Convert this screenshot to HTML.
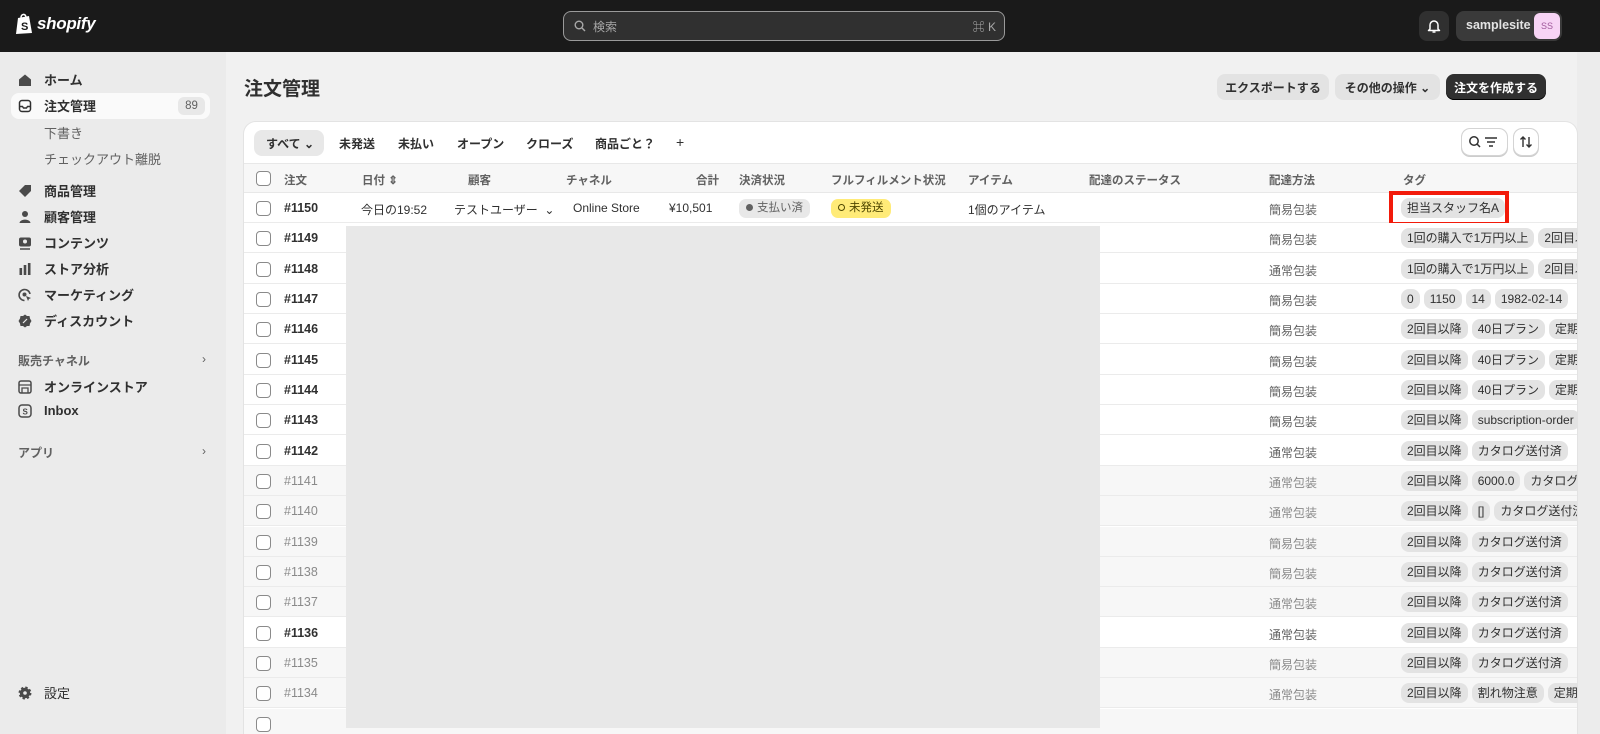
<!DOCTYPE html>
<html style="width:1600px;height:734px;overflow:hidden"><head><meta charset="utf-8"><style>
*{box-sizing:border-box;margin:0;padding:0}
body{width:1600px;height:734px;overflow:hidden;background:#f1f1f1;font-family:"Liberation Sans","Noto Sans CJK JP",sans-serif;color:#303030;font-size:13px;position:relative}
.top{position:absolute;left:0;top:0;width:1600px;height:52px;background:#1a1a1a}
.side{position:absolute;left:0;top:52px;width:226px;height:682px;background:#ebebeb}
.nav{position:absolute;left:18px;font-size:13px;font-weight:bold;color:#303030;display:flex;align-items:center}
.nav .ic{width:14px;height:14px;margin-right:12px;display:inline-block}
.sub{position:absolute;left:44px;font-size:13px;color:#616161}
.sec{position:absolute;left:18px;font-size:12px;color:#616161;font-weight:bold;width:188px}
.sec span{position:absolute;right:0;font-weight:normal}
.abs{position:absolute}
.btn{position:absolute;top:74px;height:26px;border-radius:8px;background:#e3e3e3;font-size:12px;font-weight:bold;display:flex;align-items:center;justify-content:center;color:#303030}
.card{position:absolute;left:244px;top:122px;width:1333px;height:612px;background:#fff;border-radius:12px 12px 0 0;overflow:hidden;box-shadow:0 0 0 1px #e3e3e3}
.tab{position:absolute;top:21px;font-size:12px;font-weight:bold;color:#303030}
.hdr{position:absolute;left:0;top:41px;width:100%;height:30px;background:#f7f7f7;border-top:1px solid #e8e8e8;border-bottom:1px solid #e8e8e8}
.hdr div{position:absolute;top:8px;font-size:11.5px;color:#616161;font-weight:bold}
.row{position:absolute;left:0;width:100%;height:30px;border-bottom:1px solid #ebebeb;background:#fff}
.row.g{background:#f7f7f7}
.cb{position:absolute;left:12px;top:8px;width:15px;height:15px;border:1px solid #8a8a8a;border-radius:4px;background:#fff}
.num{position:absolute;left:40px;top:8px;font-size:12.5px;font-weight:bold;color:#303030}
.g .num{font-weight:normal;color:#8a8a8a}
.ship{position:absolute;left:1025px;top:8px;font-size:12px;color:#616161}
.g .ship{color:#8a8a8a}
.tags{position:absolute;left:1157px;top:5px;display:flex;gap:4px;white-space:nowrap}
.tags span{background:#e3e3e3;border-radius:8px;height:20px;line-height:20px;padding:0 6px;font-size:12px;color:#303030;font-weight:normal}
</style></head><body>
<div class="top">
 <svg class="abs" style="left:15px;top:13px" width="19" height="22" viewBox="0 0 19 22"><path d="M3 5 L14 3 L17 20 L1 21 Z" fill="#fff"/><path d="M6 5 C6 1 10 0 11 4" stroke="#fff" fill="none" stroke-width="1.5"/><text x="6" y="17" font-size="11" font-weight="bold" fill="#1a1a1a" font-family="Liberation Sans">S</text></svg>
 <div class="abs" style="left:37px;top:14px;color:#fff;font-size:17px;font-weight:bold;font-style:italic;letter-spacing:-0.3px">shopify</div>
 <div class="abs" style="left:563px;top:11px;width:442px;height:30px;border:1.5px solid #9a9a9a;border-radius:8px;background:#303030">
  <svg class="abs" style="left:10px;top:8px" width="12" height="12" viewBox="0 0 12 12"><circle cx="5" cy="5" r="3.8" stroke="#aaa" stroke-width="1.4" fill="none"/><path d="M8 8 L11 11" stroke="#aaa" stroke-width="1.4"/></svg>
  <div class="abs" style="left:29px;top:6px;color:#a8a8a8;font-size:12px">検索</div>
  <div class="abs" style="right:8px;top:6px;color:#a8a8a8;font-size:12px">⌘ K</div>
 </div>
 <div class="abs" style="left:1419px;top:11px;width:30px;height:30px;border-radius:8px;background:#303030">
  <svg class="abs" style="left:8px;top:7px" width="14" height="16" viewBox="0 0 14 16"><path d="M3 11 V7 a4 4 0 0 1 8 0 V11 L12.5 12.5 H1.5 Z" stroke="#fff" stroke-width="1.5" fill="none" stroke-linejoin="round"/><path d="M5.5 14 h3" stroke="#fff" stroke-width="1.5"/></svg>
 </div>
 <div class="abs" style="left:1456px;top:11px;width:106px;height:30px;border-radius:8px;background:#3a3a3a">
  <div class="abs" style="left:10px;top:7px;color:#e3e3e3;font-size:12.5px;font-weight:bold">samplesite</div>
  <div class="abs" style="left:78px;top:2px;width:26px;height:26px;border-radius:6px;background:#f7d4f5;color:#a0589b;font-size:9px;text-align:center;line-height:26px">SS</div>
 </div>
</div>
<div class="side">
 <div class="abs" style="left:11px;top:41px;width:199px;height:26px;background:#fafafa;border-radius:8px"></div>
 <div class="abs" style="left:178px;top:45px;width:27px;height:18px;background:#e8e8e8;border-radius:6px;font-size:11.5px;color:#616161;text-align:center;line-height:18px">89</div>
</div>
<div class="nav" style="top:70px"><svg class="ic" viewBox="0 0 14 14"><path d="M1 6.5 L7 1.5 L13 6.5 V13 H1Z" fill="#4a4a4a"/></svg>ホーム</div>
<div class="nav" style="top:96px"><svg class="ic" viewBox="0 0 14 14"><rect x="1.5" y="1.5" width="11" height="11" rx="2.5" stroke="#303030" stroke-width="1.5" fill="none"/><path d="M1.5 7.5 H4.5 L5.5 9 H8.5 L9.5 7.5 H12.5" stroke="#303030" stroke-width="1.4" fill="none"/></svg>注文管理</div>
<div class="sub" style="top:123px">下書き</div>
<div class="sub" style="top:149px">チェックアウト離脱</div>
<div class="nav" style="top:181px"><svg class="ic" viewBox="0 0 14 14"><path d="M7 1 H13 V7 L7 13 L1 7Z" fill="#4a4a4a"/></svg>商品管理</div>
<div class="nav" style="top:207px"><svg class="ic" viewBox="0 0 14 14"><circle cx="7" cy="4" r="3" fill="#4a4a4a"/><path d="M1.5 13 C2 8.5 12 8.5 12.5 13Z" fill="#4a4a4a"/></svg>顧客管理</div>
<div class="nav" style="top:233px"><svg class="ic" viewBox="0 0 14 14"><rect x="1" y="1.5" width="12" height="9" rx="2" fill="#4a4a4a"/><circle cx="7" cy="5.5" r="2" fill="#ebebeb"/><path d="M2 13 H12" stroke="#4a4a4a" stroke-width="1.5"/></svg>コンテンツ</div>
<div class="nav" style="top:259px"><svg class="ic" viewBox="0 0 14 14"><rect x="1.5" y="6" width="2.6" height="7" fill="#4a4a4a"/><rect x="5.7" y="3" width="2.6" height="10" fill="#4a4a4a"/><rect x="9.9" y="1" width="2.6" height="12" fill="#4a4a4a"/></svg>ストア分析</div>
<div class="nav" style="top:285px"><svg class="ic" viewBox="0 0 14 14"><path d="M12 6 A5.5 5.5 0 1 0 6.5 12.5" stroke="#4a4a4a" stroke-width="1.6" fill="none"/><circle cx="6.5" cy="6.5" r="2" fill="#4a4a4a"/><path d="M8 8 L13 10 L11 11 L10 13Z" fill="#4a4a4a"/></svg>マーケティング</div>
<div class="nav" style="top:311px"><svg class="ic" viewBox="0 0 14 14"><path d="M7 0.5 L9 2 L11.5 2 L12 4.5 L13.5 7 L12 9.5 L11.5 12 L9 12 L7 13.5 L5 12 L2.5 12 L2 9.5 L0.5 7 L2 4.5 L2.5 2 L5 2Z" fill="#4a4a4a"/><path d="M5 9 L9 5" stroke="#ebebeb" stroke-width="1.2"/></svg>ディスカウント</div>
<div class="sec" style="top:352px">販売チャネル<span>›</span></div>
<div class="nav" style="top:377px"><svg class="ic" viewBox="0 0 14 14"><rect x="1" y="1" width="12" height="12" rx="2" stroke="#4a4a4a" stroke-width="1.5" fill="none"/><path d="M1 5 H13 M4 13 V8 H10 V13" stroke="#4a4a4a" stroke-width="1.3" fill="none"/></svg>オンラインストア</div>
<div class="nav" style="top:403px"><svg class="ic" viewBox="0 0 14 14"><rect x="1" y="1" width="12" height="12" rx="3" stroke="#4a4a4a" stroke-width="1.5" fill="none"/><text x="4.5" y="10.5" font-size="8" font-weight="bold" fill="#4a4a4a">S</text></svg>Inbox</div>
<div class="sec" style="top:444px">アプリ<span>›</span></div>
<div class="nav" style="top:683px"><svg class="ic" viewBox="0 0 14 14"><circle cx="7" cy="7" r="5.2" fill="#4a4a4a" stroke="#4a4a4a" stroke-width="2.5" stroke-dasharray="2.2 1.9"/><circle cx="7" cy="7" r="1.8" fill="#ebebeb"/></svg><span style="font-weight:normal">設定</span></div>

<div class="abs" style="left:244px;top:74px;font-size:19px;font-weight:bold;color:#303030">注文管理</div>
<div class="btn" style="left:1217px;width:112px">エクスポートする</div>
<div class="btn" style="left:1335px;width:105px">その他の操作 ⌄</div>
<div class="btn" style="left:1446px;width:100px;background:#303030;color:#fff;box-shadow:inset 0 -1px 0 #000">注文を作成する</div>
<div class="abs" style="left:1577px;top:52px;width:23px;height:682px;background:#ececec"></div>

<div class="card">
 <div class="abs" style="left:10px;top:8px;width:70px;height:26px;background:#e8e8e8;border-radius:8px"></div>
 <div class="tab" style="left:22px;top:13px">すべて ⌄</div>
 <div class="tab" style="left:95px;top:13px">未発送</div>
 <div class="tab" style="left:154px;top:13px">未払い</div>
 <div class="tab" style="left:213px;top:13px">オープン</div>
 <div class="tab" style="left:282px;top:13px">クローズ</div>
 <div class="tab" style="left:351px;top:13px">商品ごと？</div>
 <div class="tab" style="left:432px;top:12px;font-size:14px;font-weight:normal">+</div>
 <div class="abs" style="left:1218px;top:7px;width:45px;height:26px;border-radius:8px;box-shadow:0 0 0 1px #d4d4d4,0 1px 0 1px #ccc">
  <svg class="abs" style="left:6px;top:6px" width="32" height="14" viewBox="0 0 32 14"><circle cx="6" cy="6" r="4.2" stroke="#303030" stroke-width="1.5" fill="none"/><path d="M9 9 L12 12" stroke="#303030" stroke-width="1.5"/><path d="M17 3 H29 M19 7 H27 M21 11 H25" stroke="#303030" stroke-width="1.5"/></svg>
 </div>
 <div class="abs" style="left:1270px;top:7px;width:24px;height:26px;border-radius:8px;box-shadow:0 0 0 1px #d4d4d4,0 1px 0 1px #ccc">
  <svg class="abs" style="left:5px;top:6px" width="14" height="14" viewBox="0 0 14 14"><path d="M4 12 V2 M1.5 4.5 L4 2 L6.5 4.5 M10 2 V12 M7.5 9.5 L10 12 L12.5 9.5" stroke="#303030" stroke-width="1.4" fill="none"/></svg>
 </div>
 <div class="hdr">
  <span class="cb" style="top:7px"></span>
  <div style="left:40px">注文</div><div style="left:118px">日付 ⇕</div><div style="left:224px">顧客</div><div style="left:322px">チャネル</div><div style="left:452px">合計</div><div style="left:495px">決済状況</div><div style="left:587px">フルフィルメント状況</div><div style="left:724px">アイテム</div><div style="left:845px">配達のステータス</div><div style="left:1025px">配達方法</div><div style="left:1159px">タグ</div>
 </div>
 <div class="row" style="top:71px"><span class="cb"></span><span class="num">#1150</span>
  <span class="abs" style="left:117px;top:8px;font-size:12px">今日の19:52</span>
  <span class="abs" style="left:210px;top:8px;font-size:12px">テストユーザー &nbsp;⌄</span>
  <span class="abs" style="left:329px;top:8px;font-size:12px">Online Store</span>
  <span class="abs" style="left:425px;top:8px;font-size:12px">¥10,501</span>
  <span class="abs" style="left:495px;top:6px;height:19px;line-height:19px;padding:0 7px;border-radius:7px;background:#e8e8e8;font-size:11.5px;color:#616161"><span style="display:inline-block;width:7px;height:7px;border-radius:50%;background:#616161;margin-right:4px"></span>支払い済</span>
  <span class="abs" style="left:587px;top:6px;height:19px;line-height:19px;padding:0 7px;border-radius:7px;background:#ffeb78;font-size:11.5px;color:#4f4700"><span style="display:inline-block;width:7px;height:7px;border-radius:50%;border:1.3px solid #4f4700;margin-right:4px"></span>未発送</span>
  <span class="abs" style="left:724px;top:8px;font-size:12px">1個のアイテム</span>
  <span class="ship">簡易包装</span><div class="tags"><span>担当スタッフ名A</span></div>
  <div class="abs" style="left:1145px;top:-2px;width:120px;height:35px;border:4px solid #f21a0a"></div>
 </div>
 <div class="row" style="top:101px"><span class="cb"></span><span class="num">#1149</span><span class="ship">簡易包装</span><div class="tags"><span>1回の購入で1万円以上</span><span>2回目以降</span></div></div>
 <div class="row" style="top:132px"><span class="cb"></span><span class="num">#1148</span><span class="ship">通常包装</span><div class="tags"><span>1回の購入で1万円以上</span><span>2回目以降</span></div></div>
 <div class="row" style="top:162px"><span class="cb"></span><span class="num">#1147</span><span class="ship">簡易包装</span><div class="tags"><span>0</span><span>1150</span><span>14</span><span>1982-02-14</span></div></div>
 <div class="row" style="top:192px"><span class="cb"></span><span class="num">#1146</span><span class="ship">簡易包装</span><div class="tags"><span>2回目以降</span><span>40日プラン</span><span>定期</span></div></div>
 <div class="row" style="top:223px"><span class="cb"></span><span class="num">#1145</span><span class="ship">簡易包装</span><div class="tags"><span>2回目以降</span><span>40日プラン</span><span>定期</span></div></div>
 <div class="row" style="top:253px"><span class="cb"></span><span class="num">#1144</span><span class="ship">簡易包装</span><div class="tags"><span>2回目以降</span><span>40日プラン</span><span>定期</span></div></div>
 <div class="row" style="top:283px"><span class="cb"></span><span class="num">#1143</span><span class="ship">簡易包装</span><div class="tags"><span>2回目以降</span><span>subscription-order</span></div></div>
 <div class="row" style="top:314px"><span class="cb"></span><span class="num">#1142</span><span class="ship">通常包装</span><div class="tags"><span>2回目以降</span><span>カタログ送付済</span></div></div>
 <div class="row g" style="top:344px"><span class="cb"></span><span class="num">#1141</span><span class="ship">通常包装</span><div class="tags"><span>2回目以降</span><span>6000.0</span><span>カタログ送付済</span></div></div>
 <div class="row g" style="top:374px"><span class="cb"></span><span class="num">#1140</span><span class="ship">通常包装</span><div class="tags"><span>2回目以降</span><span>[]</span><span>カタログ送付済</span></div></div>
 <div class="row g" style="top:405px"><span class="cb"></span><span class="num">#1139</span><span class="ship">簡易包装</span><div class="tags"><span>2回目以降</span><span>カタログ送付済</span></div></div>
 <div class="row g" style="top:435px"><span class="cb"></span><span class="num">#1138</span><span class="ship">簡易包装</span><div class="tags"><span>2回目以降</span><span>カタログ送付済</span></div></div>
 <div class="row g" style="top:465px"><span class="cb"></span><span class="num">#1137</span><span class="ship">通常包装</span><div class="tags"><span>2回目以降</span><span>カタログ送付済</span></div></div>
 <div class="row" style="top:496px"><span class="cb"></span><span class="num">#1136</span><span class="ship">通常包装</span><div class="tags"><span>2回目以降</span><span>カタログ送付済</span></div></div>
 <div class="row g" style="top:526px"><span class="cb"></span><span class="num">#1135</span><span class="ship">簡易包装</span><div class="tags"><span>2回目以降</span><span>カタログ送付済</span></div></div>
 <div class="row g" style="top:556px"><span class="cb"></span><span class="num">#1134</span><span class="ship">通常包装</span><div class="tags"><span>2回目以降</span><span>割れ物注意</span><span>定期</span></div></div>
 <div class="row g" style="top:587px"><span class="cb"></span></div>
 <div class="abs" style="left:102px;top:104px;width:754px;height:502px;background:#e8e8e8"></div>
</div>
</body></html>
